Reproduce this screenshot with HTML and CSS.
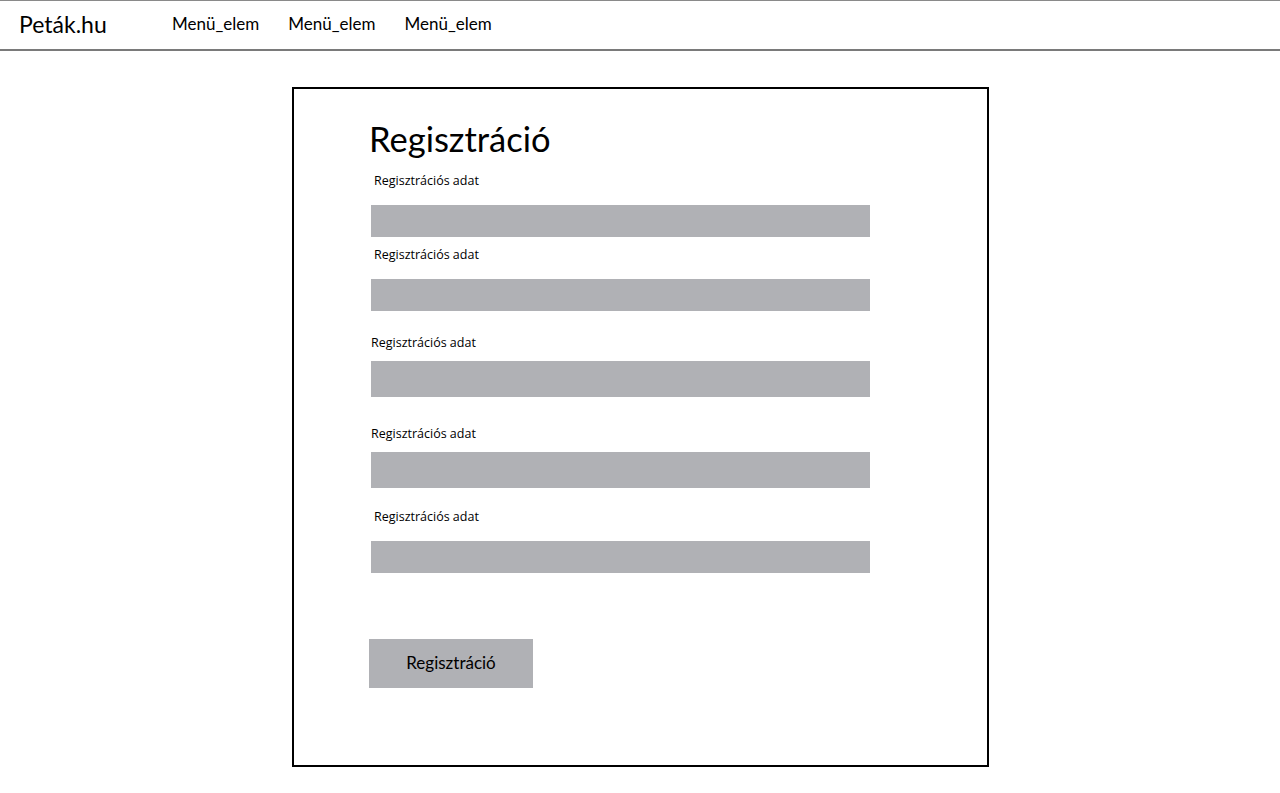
FILE: index.html
```html
<!DOCTYPE html>
<html lang="hu">
<head>
<meta charset="utf-8">
<title>Peták.hu – Regisztráció</title>
<link rel="stylesheet" href="styles.css">
</head>
<body>
<header class="topbar">
  <div class="brand">Peták.hu</div>
  <nav class="menu">
    <a class="menu-item" href="#">Menü_elem</a>
    <a class="menu-item" href="#">Menü_elem</a>
    <a class="menu-item" href="#">Menü_elem</a>
  </nav>
</header>
<main class="page">
  <section class="card">
    <h1 class="title">Regisztráció</h1>
    <div class="field f1">
      <label class="label indent">Regisztrációs adat</label>
      <div class="input"></div>
    </div>
    <div class="field f2">
      <label class="label indent">Regisztrációs adat</label>
      <div class="input"></div>
    </div>
    <div class="field f3">
      <label class="label">Regisztrációs adat</label>
      <div class="input tall"></div>
    </div>
    <div class="field f4">
      <label class="label">Regisztrációs adat</label>
      <div class="input tall"></div>
    </div>
    <div class="field f5">
      <label class="label indent">Regisztrációs adat</label>
      <div class="input"></div>
    </div>
    <button class="button" type="button">Regisztráció</button>
  </section>
</main>
</body>
</html>
```
FILE: styles.css
```css
* { box-sizing: border-box; }
html, body { margin: 0; padding: 0; background: #fff; }
body { font-family: "Lato", "Open Sans", sans-serif; color: #000; }

.topbar {
  height: 51px;
  border-top: 1px solid #8a8a8a;
  border-bottom: 2px solid #7a7a7a;
  display: flex;
  align-items: center;
  padding-left: 19px;
  padding-bottom: 3px;
}
.brand { font-size: 23px; width: 153px; }
.menu { display: flex; gap: 29px; }
.menu-item { font-size: 17px; color: #000; text-decoration: none; }

.page { display: flex; justify-content: center; padding-top: 36px; padding-left: 1px; }
.card {
  width: 697px;
  height: 680px;
  border: 2px solid #000;
  padding: 28px 0 0 75px;
  display: flex;
  flex-direction: column;
  align-items: flex-start;
}
.title { font-size: 34.5px; font-weight: 400; margin: 0 0 11px; line-height: 44px; }

.field { display: flex; flex-direction: column; padding-left: 2px; }
.label { font-family: "Open Sans", sans-serif; font-size: 12.5px; line-height: 18px; display: block; }
.label.indent { padding-left: 3px; }
.input { width: 499px; height: 32px; background: #b0b1b5; }
.input.tall { height: 36px; }

.f1 { margin-top: 0; }
.f1 .label { margin-bottom: 15px; }
.f2 { margin-top: 9px; }
.f2 .label { margin-bottom: 15px; }
.f3 { margin-top: 23px; }
.f3 .label { margin-bottom: 9px; }
.f4 { margin-top: 28px; }
.f4 .label { margin-bottom: 9px; }
.f5 { margin-top: 20px; }
.f5 .label { margin-bottom: 15px; }

.button {
  margin-top: 66px;
  width: 164px;
  height: 49px;
  border: 0;
  background: #b0b1b5;
  font-family: "Lato", "Open Sans", sans-serif;
  font-size: 17px;
  color: #000;
  padding: 0 0 3px;
}
```
